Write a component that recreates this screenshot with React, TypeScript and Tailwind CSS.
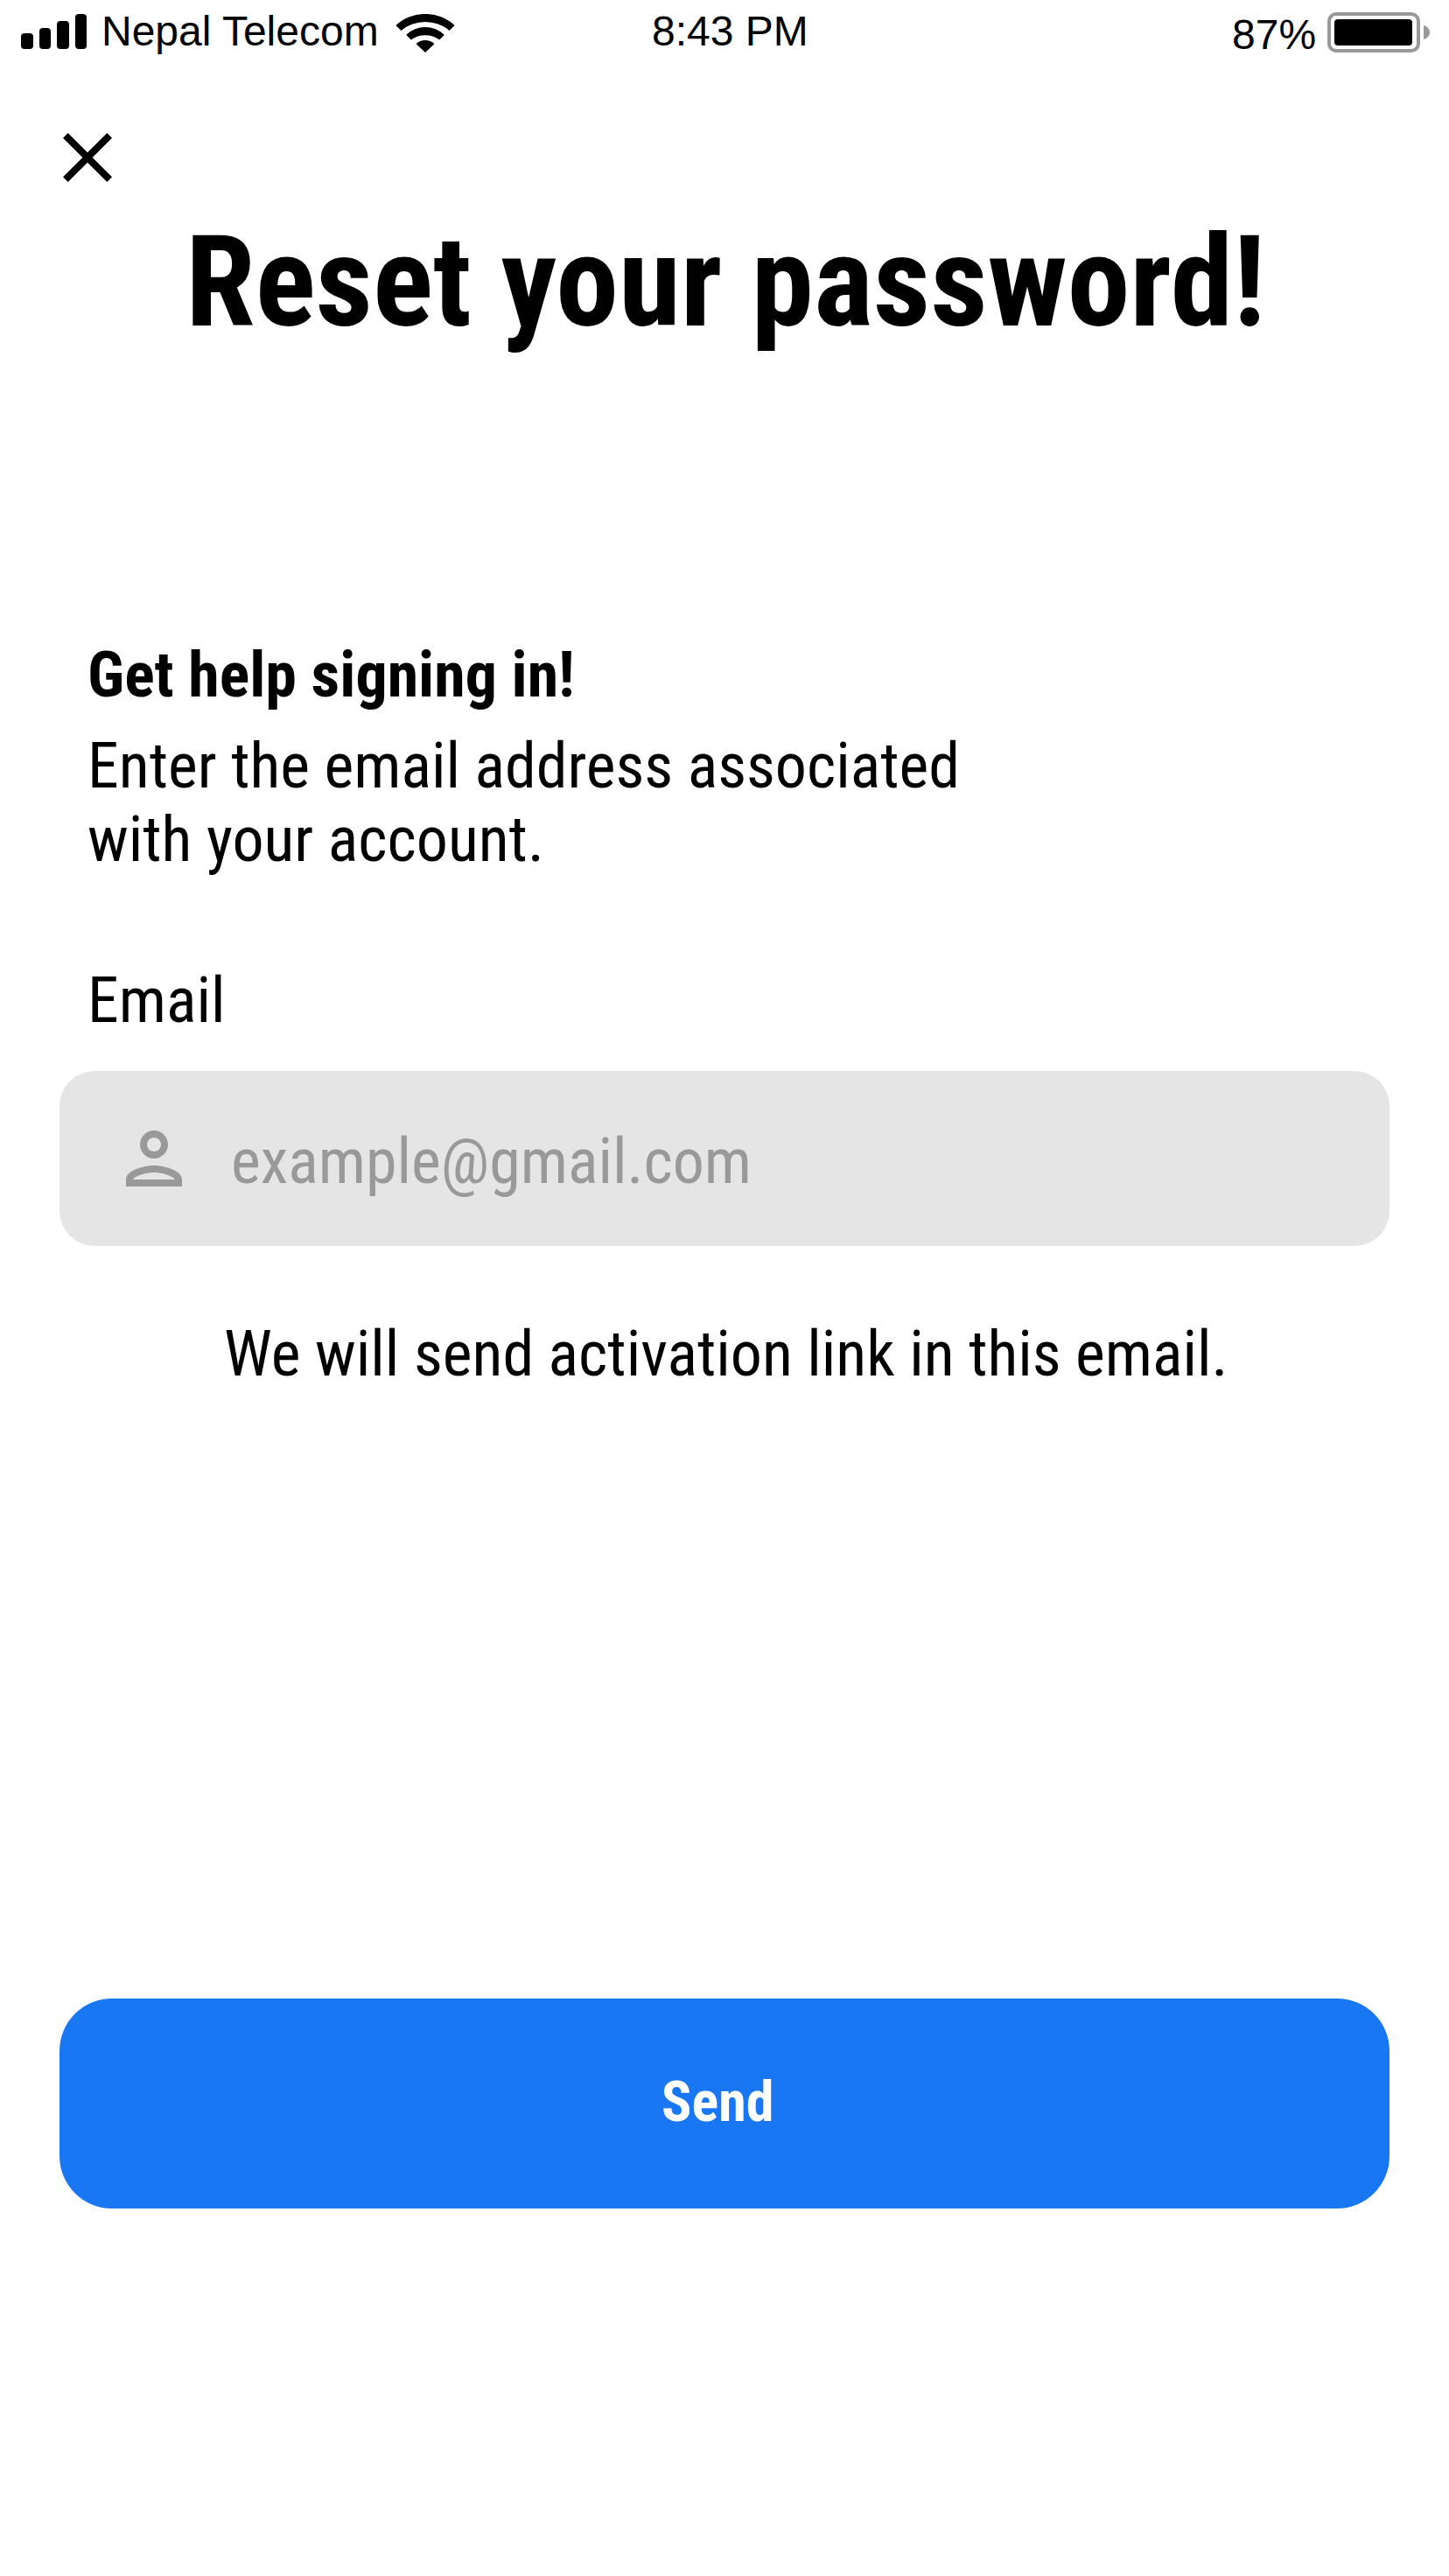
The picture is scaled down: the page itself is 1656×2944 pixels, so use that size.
function SignalBars() {
  return (
    <div className="flex h-10 w-[75px] items-end gap-[7px]">
      <span className="h-[18px] w-[13.5px] rounded-[4px] bg-black" />
      <span className="h-6 w-[13.5px] rounded-[4px] bg-black" />
      <span className="h-8 w-[13.5px] rounded-[4px] bg-black" />
      <span className="h-10 w-[13.5px] rounded-[4px] bg-black" />
    </div>
  );
}

function WifiIcon() {
  return (
    <svg width="68" height="44" viewBox="0 0 68 44" fill="black">
      <path d="M0.4 13A49.7 49.7 0 0 1 67.6 13L61.5 19A42.8 42.8 0 0 0 6.5 19Z" />
      <path d="M12.2 23.7A31.6 31.6 0 0 1 55.8 23.7L50.3 29.5A28.4 28.4 0 0 0 17.7 29.5Z" />
      <path d="M23.6 34.3A15 15 0 0 1 44.4 34.3L34 44Z" />
    </svg>
  );
}

function Battery() {
  return (
    <div className="flex items-center gap-1">
      <div className="h-[46px] w-[106px] rounded-[10px] border-4 border-[#999999] p-1">
        <div className="h-full w-[89px] rounded-[4px] bg-black" />
      </div>
      <svg width="7" height="16" viewBox="0 0 7 16" fill="#999999">
        <path d="M0 0C4 1 7 4 7 8S4 15 0 16Z" />
      </svg>
    </div>
  );
}

function StatusBar() {
  return (
    <header className="flex h-20 items-start pl-6 font-['Liberation_Sans',Arial,sans-serif] text-5xl leading-[53px]">
      <div className="mt-4">
        <SignalBars />
      </div>
      <span className="mt-[9px] ml-[17px] w-[336px] whitespace-nowrap">Nepal Telecom</span>
      <div className="mt-4">
        <WifiIcon />
      </div>
      <span className="mt-[9px] ml-[225px] w-[663px] whitespace-nowrap">8:43 PM</span>
      <span className="mt-[13px] w-[109px]">87%</span>
      <div className="mt-[14px]">
        <Battery />
      </div>
    </header>
  );
}

function CloseIcon() {
  return (
    <svg width="96" height="96" viewBox="0 0 24 24" fill="black">
      <path d="M19 6.41L17.59 5 12 10.59 6.41 5 5 6.41 10.59 12 5 17.59 6.41 19 12 13.41 17.59 19 19 17.59 13.41 12z" />
    </svg>
  );
}

function PersonIcon() {
  return (
    <svg width="96" height="96" viewBox="0 0 24 24" fill="#999999">
      <path d="M12 6c1.1 0 2 .9 2 2s-.9 2-2 2-2-.9-2-2 .9-2 2-2m0 10c2.7 0 5.8 1.29 6 2H6c.23-.72 3.31-2 6-2m0-12C9.79 4 8 5.79 8 8s1.79 4 4 4 4-1.79 4-4-1.79-4-4-4zm0 10c-2.67 0-8 1.34-8 4v2h16v-2c0-2.66-5.33-4-8-4z" />
    </svg>
  );
}

export default function App() {
  return (
    <div className="flex h-[2944px] w-[1656px] flex-col bg-white font-['Roboto_Condensed',Roboto,sans-serif] text-black">
      <StatusBar />
      <button type="button" aria-label="Close" className="mt-[52px] ml-[52px] size-24">
        <CloseIcon />
      </button>
      <main className="flex flex-col px-[68px]">
        <h1 className="mt-[10px] ml-36 text-[144px] leading-[169px] font-bold whitespace-nowrap">
          Reset your password!
        </h1>
        <section className="mt-[322px] ml-8 text-7xl">
          <h2 className="leading-[85px] font-bold">Get help signing in!</h2>
          <p className="mt-5 w-[1040px] leading-[84px]">
            Enter the email address associated
            <br />
            with your account.
          </p>
          <label htmlFor="email" className="mt-[99px] block leading-[85px]">
            Email
          </label>
        </section>
        <div className="mt-[38px] flex h-[200px] items-start rounded-[40px] bg-[#E5E5E5] pl-[60px]">
          <div className="mt-[52px]">
            <PersonIcon />
          </div>
          <input
            id="email"
            type="email"
            placeholder="example@gmail.com"
            className="mt-[61px] ml-10 h-[85px] w-[1200px] bg-transparent text-7xl leading-[85px] outline-none placeholder:text-[#999999]"
          />
        </div>
        <p className="mt-[81px] ml-[188px] text-7xl leading-[85px] whitespace-nowrap">
          We will send activation link in this email.
        </p>
        <button
          type="button"
          className="mt-[694px] flex h-60 items-start rounded-[60px] bg-[#1A77F4] pl-[688px] text-[64px] leading-[75px] font-bold text-white"
        >
          <span className="mt-[81px]">Send</span>
        </button>
      </main>
    </div>
  );
}
